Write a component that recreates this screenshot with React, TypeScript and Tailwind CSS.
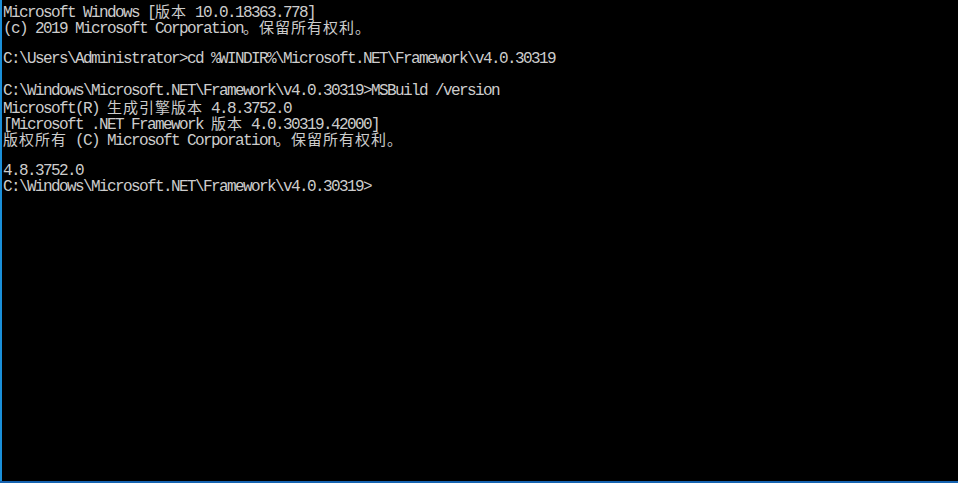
import React from 'react';

const lines = [
  'Microsoft Windows [版本 10.0.18363.778]',
  '(c) 2019 Microsoft Corporation。保留所有权利。',
  '',
  'C:\\Users\\Administrator>cd %WINDIR%\\Microsoft.NET\\Framework\\v4.0.30319',
  '',
  'C:\\Windows\\Microsoft.NET\\Framework\\v4.0.30319>MSBuild /version',
  'Microsoft(R) 生成引擎版本 4.8.3752.0',
  '[Microsoft .NET Framework 版本 4.0.30319.42000]',
  '版权所有 (C) Microsoft Corporation。保留所有权利。',
  '',
  '4.8.3752.0',
  'C:\\Windows\\Microsoft.NET\\Framework\\v4.0.30319>',
];

const wide = /[\u3000-\u303f\u4e00-\u9fff\uff00-\uffef]/;

// split a line into half-width and full-width runs so columns stay on an 8px grid
function runs(text: string) {
  return text.split(/([\u3000-\u303f\u4e00-\u9fff\uff00-\uffef]+)/).filter(Boolean);
}

function Line({ text }: { text: string }) {
  if (!text) return <div className="h-4" />;
  return (
    <div className="h-4 leading-4 whitespace-pre">
      {runs(text).map((r, i) =>
        wide.test(r) ? (
          <span key={i} className="font-['Noto_Sans_CJK_SC',sans-serif] text-[15px] leading-4 tracking-[1px]">{r}</span>
        ) : (
          <span key={i} className="tracking-[-1.6px]">{r}</span>
        )
      )}
    </div>
  );
}

export default function App() {
  return (
    <div className="flex flex-col h-screen w-full bg-black">
      <div className="flex flex-1 min-h-0">
        <div className="w-[2px] bg-[#1a8fd9]" />
        <div className="flex-1 pt-[3px] pl-px font-['Liberation_Mono','Noto_Sans_CJK_SC',monospace] text-[16px] leading-4 text-[#cccccc]">
          {lines.map((l, i) => (
            <Line key={i} text={l} />
          ))}
        </div>
      </div>
      <div className="h-[2px] bg-[#1663b0]" />
    </div>
  );
}
